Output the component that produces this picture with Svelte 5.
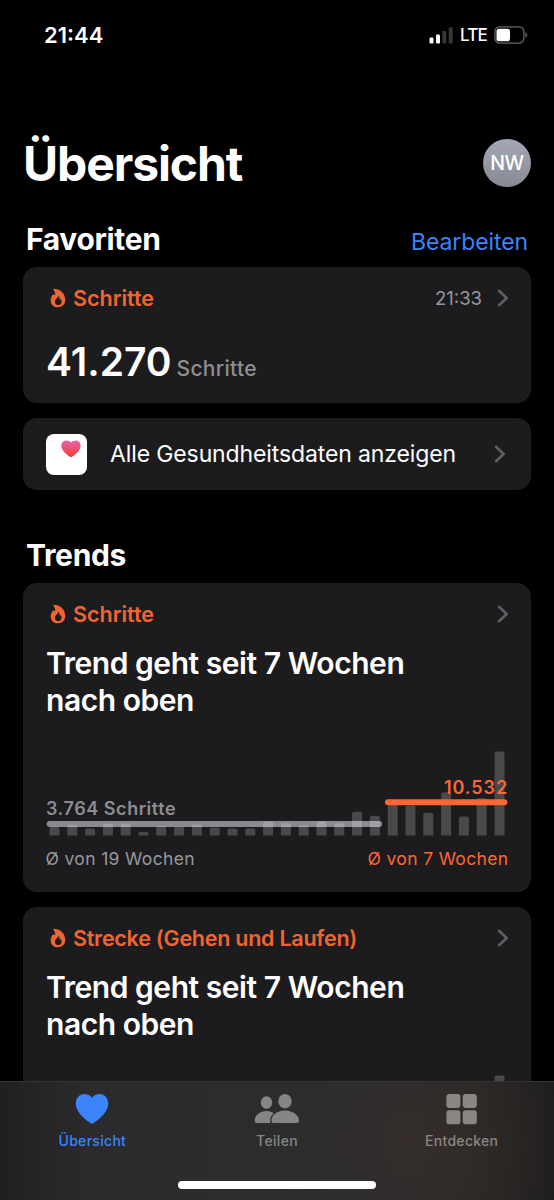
<script lang="ts">
const schritte = [8.7, 10.5, 7, 11.7, 12, 3.7, 9.5, 8.7, 11, 8, 7, 7, 14, 12.3, 10.3, 14.3, 12.3, 23.7, 19.7, 31, 30, 22.7, 43.3, 19, 37.3, 84];

const barX = (i: number) => 3.5 + i * 17.8;
</script>

{#snippet flame()}
	<svg class="flame" viewBox="0 0 16 20" width="16" height="20">
		<path
			fill="currentColor"
			fill-rule="evenodd"
			d="M3.1 0.7C9.6 0.5 15.2 4.9 15.2 11.8C15.2 16.5 12.2 19.3 8 19.3C3.7 19.3 0.7 16.5 0.7 12.4C0.7 9.7 1.9 7.6 3.5 6.3C3.8 6.9 4.3 7.2 4.7 7.1C5.5 6.9 5.3 5.5 4.7 4C4.2 2.7 3.5 1.7 3.1 0.7ZM8.4 7.6C8.7 9.7 5 10.9 5 13.9C5 15.9 6.3 17.1 8.2 17.1C10.3 17.1 11.6 15.8 11.6 13.7C11.6 12.3 11.1 11.4 10.5 10.7C10.3 11.3 10 11.6 9.7 11.6C9.2 11.4 9.9 9.1 8.4 7.6Z"
		/>
	</svg>
{/snippet}

{#snippet chevron()}
	<svg class="chevron" viewBox="0 0 12 18" width="12" height="18">
		<path d="M2 1.8L9.6 9L2 16.2" fill="none" stroke="currentColor" stroke-width="2.6" stroke-linecap="round" stroke-linejoin="round" />
	</svg>
{/snippet}

<div class="screen">
	<div class="status">
		<span class="status__time">21:44</span>
		<div class="status__icons">
			<svg class="signal" viewBox="0 0 24 17" width="24" height="17">
				<rect x="0.5" y="10.5" width="4" height="6" rx="1.2" fill="#fff" />
				<rect x="7" y="7.5" width="4" height="9" rx="1.2" fill="#fff" />
				<rect x="13.3" y="4" width="4" height="12.5" rx="1.2" fill="#363636" />
				<rect x="19.7" y="0.3" width="4" height="16.2" rx="1.2" fill="#363636" />
			</svg>
			<span class="status__lte">LTE</span>
			<svg class="battery" viewBox="0 0 34 18" width="34" height="18">
				<rect x="0.9" y="0.9" width="29" height="16.2" rx="4.8" fill="none" stroke="#666" stroke-width="1.3" />
				<rect x="2.5" y="2.7" width="13.5" height="12.6" rx="2.6" fill="#fff" />
				<path d="M31.5 6.3Q33.2 7.3 33.2 9T31.5 11.7Z" fill="#666" />
			</svg>
		</div>
	</div>

	<header class="header">
		<h1>Übersicht</h1>
		<div class="avatar">NW</div>
	</header>

	<div class="section">
		<h2>Favoriten</h2>
		<span class="section__edit">Bearbeiten</span>
	</div>

	<div class="card favorite">
		<div class="card__top">
			{@render flame()}
			<span class="card__name">Schritte</span>
			<span class="card__time">21:33</span>
			{@render chevron()}
		</div>
		<div class="value">
			<span class="value__number">41.270</span>
			<span class="value__unit">Schritte</span>
		</div>
	</div>

	<div class="card all">
		<div class="all__icon">
			<svg viewBox="0 0 20 18" width="20" height="18">
				<defs>
					<linearGradient id="heart" x1="0" y1="0" x2="0" y2="1">
						<stop offset="0" stop-color="#e863ad" />
						<stop offset="1" stop-color="#f03c30" />
					</linearGradient>
				</defs>
				<path fill="url(#heart)" d="M10 17.5C7.5 15.8 0.3 11.2 0.3 5.8C0.3 2.7 2.5 0.5 5.3 0.5C7.3 0.5 9 1.2 10 2.7C11 1.2 12.7 0.5 14.7 0.5C17.5 0.5 19.7 2.7 19.7 5.8C19.7 11.2 12.5 15.8 10 17.5Z" />
			</svg>
		</div>
		<span class="all__text">Alle Gesundheitsdaten anzeigen</span>
		{@render chevron()}
	</div>

	<div class="section section--trends">
		<h2>Trends</h2>
	</div>

	<div class="card trend">
		<div class="card__top">
			{@render flame()}
			<span class="card__name">Schritte</span>
			{@render chevron()}
		</div>
		<p class="trend__text">Trend geht seit 7 Wochen<br />nach oben</p>
		<div class="chart">
			<svg viewBox="0 0 462 86" width="462" height="86">
				<rect x="0.7" y="71" width="335.5" height="6" rx="3" fill="#8b8990" />
				{#each schritte as h, i}
					<path
						d="M{barX(i)} 85.5v{-(h - 2)}q0 -2 2 -2h6q2 0 2 2v{h - 2}z"
						fill="#fff"
						fill-opacity="0.2"
					/>
				{/each}
				<rect x="339" y="49.3" width="122.3" height="6" rx="3" fill="#fe6634" />
			</svg>
			<span class="chart__before">3.764 Schritte</span>
			<span class="chart__after">10.532</span>
		</div>
		<div class="trend__legend">
			<span>Ø von 19 Wochen</span>
			<span class="trend__now">Ø von 7 Wochen</span>
		</div>
	</div>

	<div class="card trend trend--last">
		<div class="card__top">
			{@render flame()}
			<span class="card__name card__name--long">Strecke (Gehen und Laufen)</span>
			{@render chevron()}
		</div>
		<p class="trend__text">Trend geht seit 7 Wochen<br />nach oben</p>
		<div class="chart">
			<svg viewBox="0 0 462 86" width="462" height="86">
				<rect x="448.5" y="1.5" width="10" height="84" rx="2" fill="#4a4a4b" />
			</svg>
		</div>
	</div>

	<nav class="tabs">
		<div class="tab tab--active">
			<svg viewBox="0 0 34 32" width="34" height="32">
				<path fill="currentColor" d="M17 31C14.5 29.4 0.8 21 0.8 10.5C0.8 5 4.5 1 9.3 1C12.8 1 15.5 2.4 17 5C18.5 2.4 21.2 1 24.7 1C29.5 1 33.2 5 33.2 10.5C33.2 21 19.5 29.4 17 31Z" />
			</svg>
			<span>Übersicht</span>
		</div>
		<div class="tab">
			<svg viewBox="0 0 46 32" width="46" height="32">
				<g fill="currentColor">
					<ellipse cx="12.5" cy="9.5" rx="5.7" ry="6.3" />
					<path d="M12.5 18C16 18 18.5 19.2 19.8 20.3C17.3 22.5 16 25.5 16 28.3Q16 29.5 16.6 30H3Q0.7 30 0.7 27.7C0.7 22.5 5.5 18 12.5 18Z" />
					<ellipse cx="31" cy="8.2" rx="6.7" ry="7.3" />
					<path d="M31 17.6C39.5 17.6 45 23 45 27.5Q45 30 42.5 30H19.5Q17.3 30 17.3 27.5C17.3 23 22.5 17.6 31 17.6Z" />
				</g>
			</svg>
			<span>Teilen</span>
		</div>
		<div class="tab tab--warm">
			<svg viewBox="0 0 32 32" width="32" height="32">
				<g fill="currentColor">
					<rect x="0.4" y="0.9" width="14" height="14" rx="2.8" />
					<rect x="16.8" y="0.9" width="14" height="14" rx="2.8" />
					<rect x="0.4" y="17.2" width="14" height="14" rx="2.8" />
					<rect x="16.8" y="17.2" width="14" height="14" rx="2.8" />
				</g>
			</svg>
			<span>Entdecken</span>
		</div>
		<div class="home-indicator"></div>
	</nav>
</div>

<style>
	:global(body) {
		background: #000;
	}

	.screen {
		position: relative;
		box-sizing: border-box;
		width: 554px;
		height: 1200px;
		padding: 0 23px;
		overflow: hidden;
		background: #000;
		color: #fff;
		font-family: Inter, 'Liberation Sans', sans-serif;
		white-space: nowrap;
	}

	.screen svg {
		display: block;
		flex: none;
	}

	.status {
		display: flex;
		align-items: center;
		justify-content: space-between;
		height: 70px;
		padding: 0 3px 0 21px;
	}

	.status__time {
		font-size: 22px;
		font-weight: 600;
	}

	.status__icons {
		display: flex;
		align-items: center;
	}

	.status__lte {
		margin: 0 7px;
		font-size: 17px;
		font-weight: 500;
		letter-spacing: -0.8px;
	}

	.header {
		display: flex;
		align-items: center;
		justify-content: space-between;
		height: 60px;
		margin-top: 63px;
	}

	h1,
	h2,
	p {
		margin: 0;
	}

	h1 {
		padding-top: 1px;
		font-size: 48px;
		font-weight: 700;
		letter-spacing: -1.1px;
	}

	.avatar {
		width: 48px;
		height: 48px;
		border-radius: 50%;
		background: linear-gradient(#a4a8b5, #878a93);
		font-size: 19.5px;
		font-weight: 500;
		letter-spacing: -0.5px;
		line-height: 49px;
		text-align: center;
	}

	.section {
		display: flex;
		align-items: center;
		justify-content: space-between;
		height: 40px;
		margin: 26px 3px 8px;
	}

	h2 {
		font-size: 30px;
		font-weight: 700;
		letter-spacing: -0.35px;
	}

	.section__edit {
		padding-top: 5px;
		color: #3c84fa;
		font-size: 23px;
		letter-spacing: -0.1px;
	}

	.section--trends {
		margin: 45px 3px 8px;
	}

	.card {
		box-sizing: border-box;
		border-radius: 14px;
		background: #1c1c1e;
	}

	.favorite {
		height: 136px;
	}

	.card__top {
		display: flex;
		align-items: center;
		height: 62px;
		padding: 0 22px 0 27px;
	}

	.flame {
		color: #f36430;
	}

	.card__name {
		flex: 1;
		margin-left: 7px;
		color: #f36430;
		font-size: 21.5px;
		font-weight: 600;
	}

	.card__name--long {
		letter-spacing: -0.25px;
	}

	.card__time {
		margin-right: 15px;
		color: #98989f;
		font-size: 18.5px;
	}

	.chevron {
		color: #5f5f63;
	}

	.value {
		display: flex;
		align-items: baseline;
		gap: 5px;
		padding-left: 23px;
		line-height: 66px;
	}

	.value__number {
		font-size: 39px;
		font-weight: 600;
	}

	.value__unit {
		color: #8e8e93;
		font-size: 21px;
		font-weight: 500;
		letter-spacing: 0.3px;
	}

	.all {
		display: flex;
		align-items: center;
		height: 72px;
		margin-top: 15px;
		padding: 0 25px 0 22.5px;
	}

	.all__icon {
		display: flex;
		box-sizing: border-box;
		width: 41px;
		height: 41px;
		padding: 6px 0 0 15.5px;
		border-radius: 8px;
		background: #fff;
	}

	.all__text {
		flex: 1;
		margin-left: 23.5px;
		font-size: 23px;
		letter-spacing: -0.12px;
	}

	.trend {
		height: 309px;
	}

	.trend__text {
		padding-left: 23px;
		font-size: 30px;
		font-weight: 600;
		letter-spacing: -0.45px;
		line-height: 37px;
	}

	.chart {
		position: relative;
		margin: 31px 23px 0;
	}

	.chart__before,
	.chart__after {
		position: absolute;
		font-size: 18px;
		font-weight: 600;
		line-height: 20px;
	}

	.chart__before {
		top: 49px;
		left: 0;
		color: #8e8c93;
		letter-spacing: 0.55px;
	}

	.chart__after {
		top: 28px;
		right: 0;
		color: #fe6634;
		letter-spacing: 0.9px;
	}

	.trend__legend {
		display: flex;
		justify-content: space-between;
		padding: 1px 22.5px 0;
		color: #98989f;
		font-size: 17.5px;
		letter-spacing: 0.35px;
		line-height: 44px;
	}

	.trend__now {
		color: #fe6634;
	}

	.trend--last {
		margin-top: 15px;
	}

	.tabs {
		position: absolute;
		right: 0;
		bottom: 0;
		left: 0;
		display: flex;
		box-sizing: border-box;
		height: 119px;
		border-top: 1px solid #343436;
		background:
			radial-gradient(ellipse 150px 130px at 425px 60px, rgba(54, 45, 41, 0.8), transparent),
			linear-gradient(90deg, #202022, #2b2b2d 90px, #2d2d2f 400px, #2a2827 470px, #1e1d1d);
	}

	.tab {
		display: flex;
		flex: 1;
		flex-direction: column;
		align-items: center;
		padding-top: 11px;
		color: #858587;
		font-size: 14px;
		font-weight: 500;
		letter-spacing: 0.3px;
		line-height: 32px;
	}

	.tab--active {
		color: #3c84fa;
	}

	.tab--warm {
		color: #8b8683;
	}

	.home-indicator {
		position: absolute;
		bottom: 11px;
		left: 178px;
		width: 198px;
		height: 8px;
		border-radius: 4px;
		background: #fff;
	}
</style>
